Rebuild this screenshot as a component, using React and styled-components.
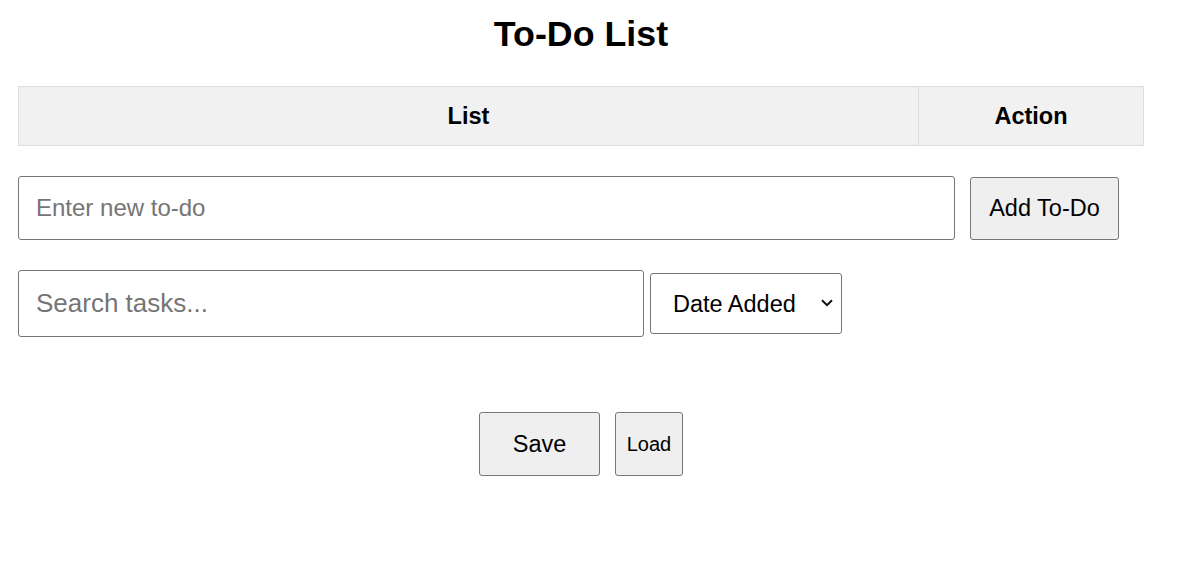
import styled, { createGlobalStyle } from "styled-components";

const GlobalStyle = createGlobalStyle`
  body {
    margin: 0;
    background: #fff;
    font-family: "Liberation Sans", Arial, sans-serif;
    color: #000;
  }
`;

const Container = styled.div`
  width: 1126px;
  padding: 14px 0 0 18px;
`;

const Title = styled.h1`
  margin: 0 0 31px;
  font-size: 35.8px;
  line-height: 41px;
  font-weight: 700;
  text-align: center;
`;

const Table = styled.table`
  width: 100%;
  border-collapse: collapse;
`;

const Th = styled.th`
  width: ${(props) => props.width};
  height: 58px;
  padding: 0;
  background-color: #f1f1f1;
  border: 1px solid #dddddd;
  font-size: 23.5px;
  font-weight: 700;
  text-align: center;
`;

const Row = styled.div`
  display: flex;
  align-items: ${(props) => props.align || "center"};
  gap: ${(props) => props.gap || "15px"};
  margin-top: ${(props) => props.top};
  justify-content: ${(props) => props.justify || "flex-start"};
`;

const TextInput = styled.input`
  box-sizing: border-box;
  width: ${(props) => props.width};
  height: ${(props) => props.height};
  padding: 0 17px;
  border: 1px solid #767676;
  border-radius: 3px;
  font-family: "Liberation Sans", Arial, sans-serif;
  font-size: ${(props) => props.size};
  color: #000;
  outline: none;

  &::placeholder {
    color: #757575;
  }
`;

const Button = styled.button`
  box-sizing: border-box;
  width: ${(props) => props.width};
  height: ${(props) => props.height || "64px"};
  padding: 0;
  background-color: #efefef;
  border: 1px solid #767676;
  border-radius: 3px;
  font-family: "Liberation Sans", Arial, sans-serif;
  font-size: ${(props) => props.size || "23.5px"};
  color: #000;
  cursor: pointer;
`;

const SelectWrap = styled.div`
  position: relative;
  display: inline-flex;
`;

const Select = styled.select`
  box-sizing: border-box;
  width: 192px;
  height: 61px;
  padding: 0 30px 0 22px;
  border: 1px solid #767676;
  border-radius: 3px;
  background-color: #fff;
  font-family: "Liberation Sans", Arial, sans-serif;
  font-size: 23.5px;
  color: #000;
  appearance: none;
  -webkit-appearance: none;
`;

const Chevron = styled.svg`
  position: absolute;
  right: 9px;
  top: 26px;
  pointer-events: none;
`;

const App = () => {
  return (
    <>
      <GlobalStyle />
      <Container>
        <Title>To-Do List</Title>
        <Table>
          <thead>
            <tr>
              <Th width="80%">List</Th>
              <Th width="20%">Action</Th>
            </tr>
          </thead>
        </Table>

        <Row top="30px" gap="15px">
          <TextInput width="937px" height="64px" size="24px" placeholder="Enter new to-do" />
          <Button width="149px" height="63px">Add To-Do</Button>
        </Row>

        <Row top="30px" gap="6px">
          <TextInput width="626px" height="67px" size="26px" placeholder="Search tasks..." />
          <SelectWrap>
            <Select defaultValue="date">
              <option value="date">Date Added</option>
              <option value="name">Name</option>
            </Select>
            <Chevron width="12" height="8" viewBox="0 0 12 8">
              <path d="M1 1.2 L6 6.2 L11 1.2" fill="none" stroke="#111" strokeWidth="2" />
            </Chevron>
          </SelectWrap>
        </Row>

        <Row top="75px" gap="15px" justify="center">
          <Button width="121px">Save</Button>
          <Button width="68px" size="20px">Load</Button>
        </Row>
      </Container>
    </>
  );
};

export default App;
